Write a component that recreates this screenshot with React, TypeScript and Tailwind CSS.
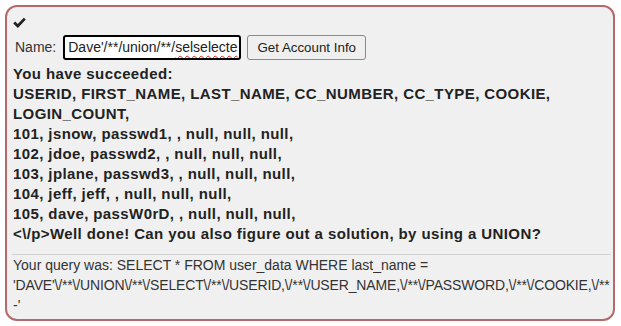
import React from "react";

const rows = [
  "101, jsnow, passwd1, , null, null, null,",
  "102, jdoe, passwd2, , null, null, null,",
  "103, jplane, passwd3, , null, null, null,",
  "104, jeff, jeff, , null, null, null,",
  "105, dave, passW0rD, , null, null, null,",
];

export default function App() {
  return (
    <div className="w-[621px] h-[326px] overflow-hidden bg-white pt-[5px] pl-[5px] font-['Liberation_Sans',Arial,sans-serif]">
      <div className="w-[610px] h-[316px] rounded-[12px] border-2 border-[#b46a6a] bg-[#f0f0f0] pl-[6px] pr-[2px]">
        {/* check */}
        <div className="mt-[9px] h-[12px] flex items-center">
          <svg width="13" height="11" viewBox="0 0 13 11">
            <path
              d="M1.2 5.6 L4.8 9 L11.8 1.6"
              fill="none"
              stroke="#222"
              strokeWidth="2.8"
            />
          </svg>
        </div>

        {/* form */}
        <div className="mt-[7px] flex items-center h-[25px] ml-[2px]">
          <span className="text-[14px] text-[#333] mr-[7px]">Name:</span>
          <div className="w-[178px] h-[25px] border-2 border-black rounded-[3px] bg-white pl-[3px] overflow-hidden whitespace-nowrap text-[14px] leading-[21px] text-[#222]">
            Dave'/**/union/**/
            <span className="underline decoration-wavy decoration-[#e02020] decoration-1 underline-offset-[3px]">
              selselecte
            </span>
          </div>
          <button className="ml-[6px] w-[119px] h-[25px] border border-[#8a8a8a] rounded-[3px] bg-[#efefef] text-[13.33px] text-[#222]">
            Get Account Info
          </button>
        </div>

        {/* result */}
        <div className="mt-[4px] text-[15px] leading-[20px] font-bold tracking-[0.4px] text-[#222]">
          <div>You have succeeded:</div>
          <div>USERID, FIRST_NAME, LAST_NAME, CC_NUMBER, CC_TYPE, COOKIE,</div>
          <div>LOGIN_COUNT,</div>
          {rows.map((r) => (
            <div key={r}>{r}</div>
          ))}
          <div>&lt;\/p&gt;Well done! Can you also figure out a solution, by using a UNION?</div>
        </div>

        <div className="mt-[10px] ml-[-1px] border-t border-[#cfcfcf]" />

        <div className="text-[14px] leading-[20px] text-[#333]">
          <div>Your query was: SELECT * FROM user_data WHERE last_name =</div>
          <div className="whitespace-nowrap tracking-[-0.15px]">
            'DAVE'\/**\/UNION\/**\/SELECT\/**\/USERID,\/**\/USER_NAME,\/**\/PASSWORD,\/**\/COOKIE,\/**
          </div>
          <div>-'</div>
        </div>
      </div>
    </div>
  );
}
